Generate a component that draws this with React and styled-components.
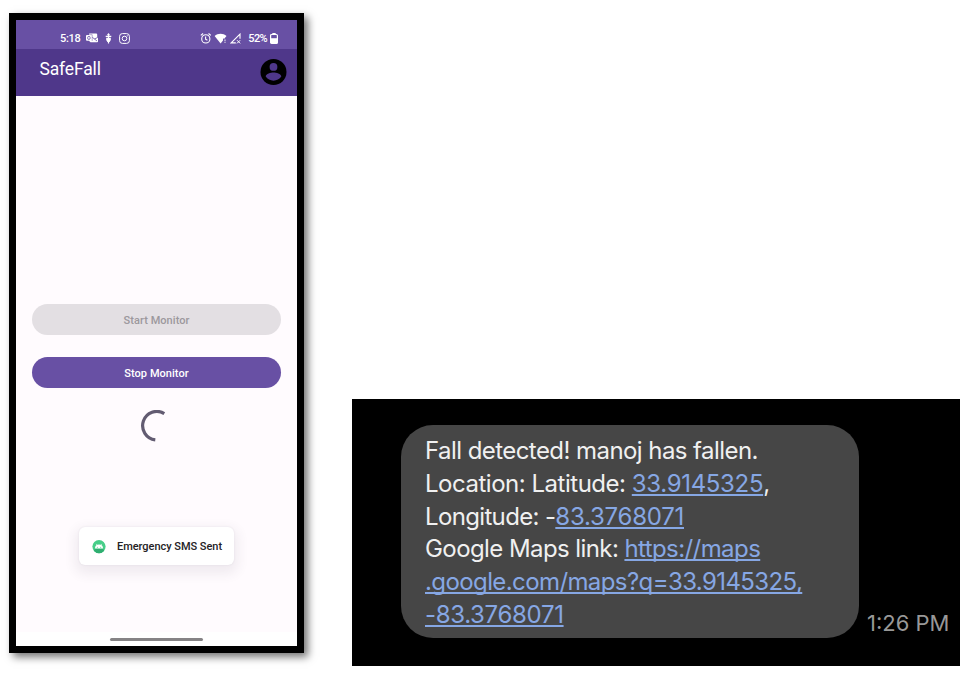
import React from "react";
import styled, { createGlobalStyle } from "styled-components";

const GlobalStyle = createGlobalStyle`
  * { box-sizing: border-box; }
  body { margin: 0; background: #fff; font-family: Roboto, "Liberation Sans", sans-serif; }
`;

const Page = styled.main`
  width: 974px;
  height: 680px;
  display: flex;
  align-items: flex-start;
  gap: 48px;
  padding: 13px 14px 0 9px;
  overflow: hidden;
`;

const Phone = styled.section`
  width: 295px;
  height: 640px;
  flex: none;
  display: flex;
  flex-direction: column;
  border: 7px solid #000;
  background: #fffbfe;
  box-shadow: 4px 4px 8px rgba(0, 0, 0, 0.55);
`;

const StatusBar = styled.div`
  height: 29px;
  flex: none;
  display: flex;
  align-items: center;
  justify-content: space-between;
  padding: 7px 19px 0 44px;
  background: #6850a4;
  color: #fff;
`;

const StatusGroup = styled.div`
  display: flex;
  align-items: center;
  gap: ${(p) => p.$gap}px;
  svg { display: block; flex: none; }
`;

const StatusText = styled.span`
  font-size: 11px;
  line-height: 14px;
  font-weight: 500;
  letter-spacing: ${(p) => p.$spacing || 0}px;
  padding-top: 1px;
  margin: 0 ${(p) => p.$right || 0}px 0 ${(p) => p.$left || 0}px;
`;

const AppBar = styled.header`
  height: 47px;
  flex: none;
  display: flex;
  justify-content: space-between;
  padding: 9px 10px 0 23.5px;
  background: #4f378a;
  svg { display: block; }
`;

const AppTitle = styled.h1`
  margin: 0;
  color: #fff;
  font-size: 17.5px;
  line-height: 22px;
  font-weight: 400;
  letter-spacing: -0.15px;
`;

const Content = styled.div`
  height: 536px;
  flex: none;
  display: flex;
  flex-direction: column;
  align-items: center;
  padding: 208px 16px 0 16px;
`;

const MonitorButton = styled.button`
  width: 249px;
  height: 31px;
  flex: none;
  padding: 2px 0 0;
  margin-bottom: 22px;
  border: 0;
  border-radius: 16px;
  font: 500 11px/14px Roboto, sans-serif;
  letter-spacing: 0.05px;
  background: ${(p) => (p.disabled ? "#e3dfe3" : "#6850a4")};
  color: ${(p) => (p.disabled ? "#9c989d" : "#fff")};
`;

const Spinner = styled.svg`
  display: block;
  flex: none;
  margin-right: 1px;
`;

const Toast = styled.div`
  width: 155px;
  height: 38px;
  flex: none;
  margin-top: 85px;
  display: flex;
  align-items: center;
  gap: 11px;
  padding: 1px 0 0 13px;
  border-radius: 6px;
  background: #fff;
  box-shadow: 0 5px 12px 4px rgba(70, 50, 80, 0.08), 0 0 2px rgba(70, 50, 80, 0.1);
  color: #242225;
  font-size: 11px;
  font-weight: 500;
  letter-spacing: -0.03px;
  white-space: nowrap;
  svg { display: block; flex: none; }
`;

const NavBar = styled.div`
  flex: 1;
  display: flex;
  align-items: flex-end;
  justify-content: center;
  padding-bottom: 5px;
  background: #fff;
`;

const NavHandle = styled.div`
  width: 93px;
  height: 3px;
  border-radius: 2px;
  background: #858385;
`;

const SmsPanel = styled.section`
  width: 608px;
  height: 267px;
  flex: none;
  margin-top: 386px;
  display: flex;
  align-items: flex-start;
  padding: 26px 0 0 49px;
  background: #000;
  font-family: Inter, "Liberation Sans", sans-serif;
`;

const Bubble = styled.div`
  width: 458px;
  height: 213px;
  flex: none;
  padding: 10.3px 0 0 24px;
  border-radius: 32px;
  background: #464646;
  color: #f0f0f0;
`;

const Line = styled.div`
  height: 32.7px;
  font-size: 24px;
  line-height: 32.7px;
  letter-spacing: ${(p) => p.$spacing}px;
  white-space: nowrap;
`;

const Link = styled.span`
  color: #86a7e4;
  letter-spacing: ${(p) => p.$spacing}px;
  text-decoration: underline;
  text-decoration-thickness: 2px;
  text-underline-offset: 2px;
  text-decoration-skip-ink: none;
`;

const Time = styled.time`
  margin: 184px 0 0 8px;
  color: #989898;
  font-size: 22px;
  line-height: 28px;
  letter-spacing: 0px;
  white-space: nowrap;
`;

const MailIcon = () => (
  <svg width="12" height="10" viewBox="0 0 12 10" fill="#fff">
    <path d="M3.2 .6h7a1 1 0 0 1 1 1v3L12 5v3.4a.8.8 0 0 1-.8.8H4.5L3.2 8z" />
    <path d="M6.3 4.3 8.4 5.9 11.6 4.6M8.4 5.9 11 8" stroke="#6850a4" strokeWidth=".8" fill="none" />
    <rect y="2" width="5.8" height="5.8" rx="1" />
    <ellipse cx="2.9" cy="4.9" rx="1.3" ry="1.6" fill="none" stroke="#6850a4" strokeWidth=".8" />
    <path d="M3.4 1.7h2.8v6.2" fill="none" stroke="#6850a4" strokeWidth=".5" />
  </svg>
);

const PinIcon = () => (
  <svg width="7" height="11" viewBox="0 0 7 11" fill="#fff">
    <path d="M3.5 0 4.9 1.7 3.5 3.2 2.1 1.7z" />
    <path d="M3.5 2.5v8" stroke="#fff" strokeWidth="1.2" />
    <path d="M.7 2.8h5.6v1.2H.7zM1.2 4.8h4.6v2.3L4.6 9H2.4L1.2 7.1z" />
  </svg>
);

const CameraIcon = () => (
  <svg width="11" height="11" viewBox="0 0 11 11" fill="none" stroke="#fff">
    <rect x=".6" y=".6" width="9.8" height="9.8" rx="2.8" strokeWidth="1" />
    <circle cx="5.5" cy="5.5" r="2.3" strokeWidth="1" />
    <circle cx="8.2" cy="2.8" r=".6" fill="#fff" stroke="none" />
  </svg>
);

const AlarmIcon = () => (
  <svg width="11" height="11" viewBox="0 0 11 11" fill="none" stroke="#fff" strokeWidth="1.1">
    <circle cx="5.8" cy="5.9" r="4.1" />
    <path d="M5.6 3.6v2.5l1.8 1.1M.8 2.4 3.1.5M10.8 2.4 8.5.5" />
  </svg>
);

const WifiIcon = () => (
  <svg width="13" height="11" viewBox="0 0 13 11" fill="#fff">
    <path d="M.6 3.1C4-.1 9.1-.1 12.5 3.1L10.3 5.8 9 5.6V7.4L6.6 10.4z" />
    <path d="M11 6.5v1.4M11 8.7v1.1" stroke="#fff" strokeWidth="1" />
  </svg>
);

const SignalIcon = () => (
  <svg width="11" height="11" viewBox="0 0 11 11" fill="none" stroke="#fff">
    <path d="M5.8 9.9H1.2L10 1.1v4.7" strokeWidth="1.1" />
    <path d="M7 7.2l3.2 3.2M10.2 7.2 7 10.4" strokeWidth="1" />
  </svg>
);

const BatteryIcon = () => (
  <svg width="8" height="11" viewBox="0 0 8 11">
    <path d="M2.3 0h3.4v1.4H2.3z" fill="#fff" />
    <rect x=".6" y="1.5" width="6.8" height="8.9" rx="1" fill="none" stroke="#fff" strokeWidth="1.2" />
    <path d="M1 5.2h6V10H1z" fill="#fff" />
  </svg>
);

const AccountIcon = () => (
  <svg width="27" height="27" viewBox="0 0 27 27">
    <circle cx="13.5" cy="14" r="13" fill="#000" />
    <circle cx="13.5" cy="8.9" r="3.9" fill="#4f378a" />
    <path d="M5.7 18.5c.1-2.6 5.2-4 7.8-4s7.7 1.4 7.8 4a9.4 9.4 0 0 1-15.6 0z" fill="#4f378a" />
  </svg>
);

const AndroidIcon = () => (
  <svg width="14" height="14" viewBox="0 0 14 14">
    <circle cx="7" cy="6.6" r="6.6" fill="#46ce88" />
    <path d="M1.7 10.6A6.6 6.6 0 0 0 12.3 10.6L10.6 8.6H3.4z" fill="#2fae70" />
    <path d="M3 8.6a4 4 0 0 1 8 0z" fill="#fff" />
    <path d="M4.2 3.9l1 1.5M9.8 3.9l-1 1.5" stroke="#fff" strokeWidth=".6" />
    <circle cx="5.3" cy="7.2" r=".5" fill="#46ce88" />
    <circle cx="8.7" cy="7.2" r=".5" fill="#46ce88" />
  </svg>
);

export default function App() {
  return (
    <>
      <GlobalStyle />
      <Page>
        <Phone>
          <StatusBar>
            <StatusGroup $gap={7}>
              <StatusText $spacing={-0.3} $right={-1}>5:18</StatusText>
              <MailIcon />
              <PinIcon />
              <CameraIcon />
            </StatusGroup>
            <StatusGroup $gap={3}>
              <AlarmIcon />
              <WifiIcon />
              <SignalIcon />
              <StatusText $left={4} $spacing={-0.65}>52%</StatusText>
              <BatteryIcon />
            </StatusGroup>
          </StatusBar>
          <AppBar>
            <AppTitle>SafeFall</AppTitle>
            <AccountIcon />
          </AppBar>
          <Content>
            <MonitorButton disabled>Start Monitor</MonitorButton>
            <MonitorButton>Stop Monitor</MonitorButton>
            <Spinner width="32" height="32" viewBox="0 0 32 32">
              <path d="M15.3 29.8A14.2 14.2 0 1 1 24.3 3.6" fill="none" stroke="#625b71" strokeWidth="3.2" />
            </Spinner>
            <Toast>
              <AndroidIcon />
              Emergency SMS Sent
            </Toast>
          </Content>
          <NavBar>
            <NavHandle />
          </NavBar>
        </Phone>
        <SmsPanel>
          <Bubble>
            <Line $spacing={-0.56}>Fall detected! manoj has fallen.</Line>
            <Line $spacing={-0.48}>
              Location: Latitude: <Link $spacing={-0.33}>33.9145325</Link>,
            </Line>
            <Line $spacing={-0.65}>
              Longitude: -<Link $spacing={-0.25}>83.3768071</Link>
            </Line>
            <Line $spacing={-0.58}>
              Google Maps link: <Link $spacing={-0.58}>https://maps</Link>
            </Line>
            <Line>
              <Link $spacing={-0.6}>.google.com/maps?q=33.9145325,</Link>
            </Line>
            <Line>
              <Link $spacing={-0.33}>-83.3768071</Link>
            </Line>
          </Bubble>
          <Time>1:26 PM</Time>
        </SmsPanel>
      </Page>
    </>
  );
}
